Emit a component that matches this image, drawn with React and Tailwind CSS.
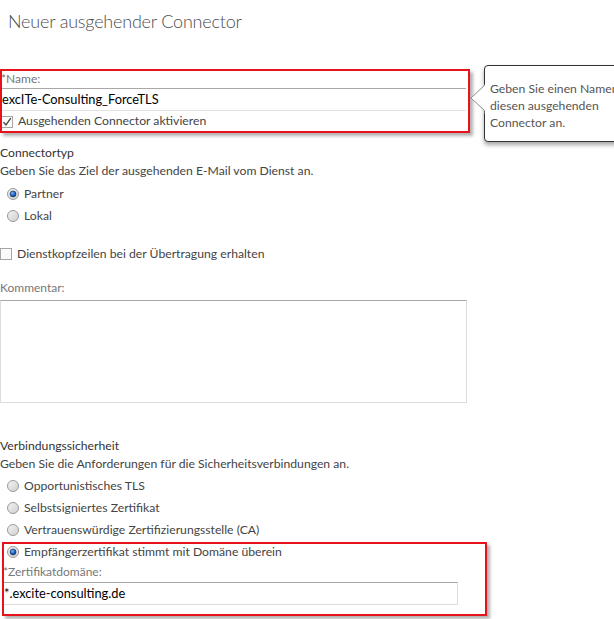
import React from 'react';

const font = { fontFamily: 'Lato, "Open Sans", sans-serif' };

const Radio = ({ checked }) => (
  <svg width="12" height="12" viewBox="0 0 12 12" className="shrink-0">
    <defs>
      <linearGradient id={checked ? 'rgc' : 'rgu'} x1="0" y1="0" x2="1" y2="1">
        <stop offset="0" stopColor="#f4f4f4" />
        <stop offset="1" stopColor="#cfcfcf" />
      </linearGradient>
      <radialGradient id="dot" cx="0.4" cy="0.35" r="0.7">
        <stop offset="0" stopColor="#7fb4f0" />
        <stop offset="0.6" stopColor="#1f5fbf" />
        <stop offset="1" stopColor="#0d2f6a" />
      </radialGradient>
    </defs>
    <circle cx="6" cy="6" r="5.5" fill={`url(#${checked ? 'rgc' : 'rgu'})`} stroke="#9a9a9a" strokeWidth="1" />
    {checked && <circle cx="6" cy="6" r="3" fill="url(#dot)" stroke="#1a2f55" strokeWidth="0.6" />}
  </svg>
);

const Checkbox = ({ checked }) => (
  <svg width="12" height="12" viewBox="0 0 12 12" className="shrink-0">
    <rect x="0.5" y="0.5" width="11" height="11" fill="#fbfbfb" stroke="#a6a6a6" />
    {checked && <path d="M2.5 6.2 L5 9 L9.8 2.2" fill="none" stroke="#4a4a4a" strokeWidth="1.4" />}
  </svg>
);

const RadioRow = ({ checked, children }) => (
  <div className="flex items-center gap-[5px] pl-[7px] h-[22px] text-[12.2px] text-[#444]">
    <Radio checked={checked} />
    <span>{children}</span>
  </div>
);

const Mark = ({ className }) => (
  <div className={`pointer-events-none absolute border-[2px] border-[#e8121a] shadow-[3px_3px_3px_rgba(0,0,0,0.3)] ${className}`} />
);

export default function App() {
  return (
    <div className="relative w-[614px] h-[619px] overflow-hidden bg-white" style={font}>
      <div className="pt-[6px] pl-[8px] h-[69px] text-[18px] tracking-[-0.2px] font-light text-[#4d4d4d] leading-[30px]">
        Neuer ausgehender Connector
      </div>

      <div className="relative w-[466px]">
        <div className="h-[19px] pt-[1px] pl-[1px] text-[12px] text-[#777] leading-[18px]">*Name:</div>
        <div className="h-[23px] border-t border-[#a8a8a8] border-b border-b-[#e2e2e2] flex items-center pl-[2px] text-[12.8px] text-black">
          excITe-Consulting_ForceTLS
        </div>
        <div className="h-[21px] flex items-center gap-[5px] pl-[1px] text-[12.2px] text-[#444]">
          <Checkbox checked />
          <span>Ausgehenden Connector aktivieren</span>
        </div>
      </div>

      <div className="mt-[12px] text-[12.2px] text-[#444] leading-[18px]">
        <div className="text-[#333]">Connectortyp</div>
        <div>Geben Sie das Ziel der ausgehenden E-Mail vom Dienst an.</div>
      </div>
      <div className="mt-[3px]">
        <RadioRow checked>Partner</RadioRow>
        <RadioRow>Lokal</RadioRow>
      </div>

      <div className="mt-[17px] h-[20px] flex items-center gap-[5px] text-[12.2px] text-[#444]">
        <Checkbox />
        <span>Dienstkopfzeilen bei der Übertragung erhalten</span>
      </div>

      <div className="mt-[15px] h-[18px] text-[12px] text-[#777] leading-[18px]">Kommentar:</div>
      <div className="mt-[3px] w-[467px] h-[103px] border border-[#dcdcdc] border-t-[#a8a8a8]" />

      <div className="mt-[34px] text-[12.2px] text-[#444] leading-[18px]">
        <div className="text-[#333]">Verbindungssicherheit</div>
        <div>Geben Sie die Anforderungen für die Sicherheitsverbindungen an.</div>
      </div>
      <div className="mt-[2px]">
        <RadioRow>Opportunistisches TLS</RadioRow>
        <RadioRow>Selbstsigniertes Zertifikat</RadioRow>
        <RadioRow>Vertrauenswürdige Zertifizierungsstelle (CA)</RadioRow>
        <RadioRow checked>Empfängerzertifikat stimmt mit Domäne überein</RadioRow>
      </div>
      <div className="pl-[2px]">
        <div className="h-[19px] pl-[1px] text-[12px] text-[#777] leading-[18px]">*Zertifikatdomäne:</div>
        <div className="w-[456px] h-[23px] border border-[#dcdcdc] border-t-[#a8a8a8] flex items-center pl-[1px] text-[12.8px] text-black">
          *.excite-consulting.de
        </div>
      </div>

      <Mark className="left-0 top-[69px] w-[470px] h-[64px]" />
      <Mark className="left-[2px] top-[542px] w-[485px] h-[74px]" />

      <div className="absolute left-[470px] top-[65px] w-[180px] h-[77px] pointer-events-none">
        <div className="absolute left-[14px] top-0 w-[166px] h-[77px] bg-white border border-[#333] rounded-[4px] shadow-[0_3px_4px_rgba(0,0,0,0.35)] pl-[5px] pt-[14px] text-[12.2px] text-[#555] leading-[17px]">
          <div className="whitespace-nowrap">Geben Sie einen Namen für</div>
          <div>diesen ausgehenden</div>
          <div>Connector an.</div>
        </div>
        <svg className="absolute left-0 top-[19px]" width="16" height="30" viewBox="0 0 16 30">
          <path d="M15 1 L1 14 L15 27" fill="white" stroke="#8a8a8a" strokeWidth="1" />
          <path d="M15.5 0 L15.5 30" stroke="white" strokeWidth="1.5" />
        </svg>
      </div>
    </div>
  );
}
